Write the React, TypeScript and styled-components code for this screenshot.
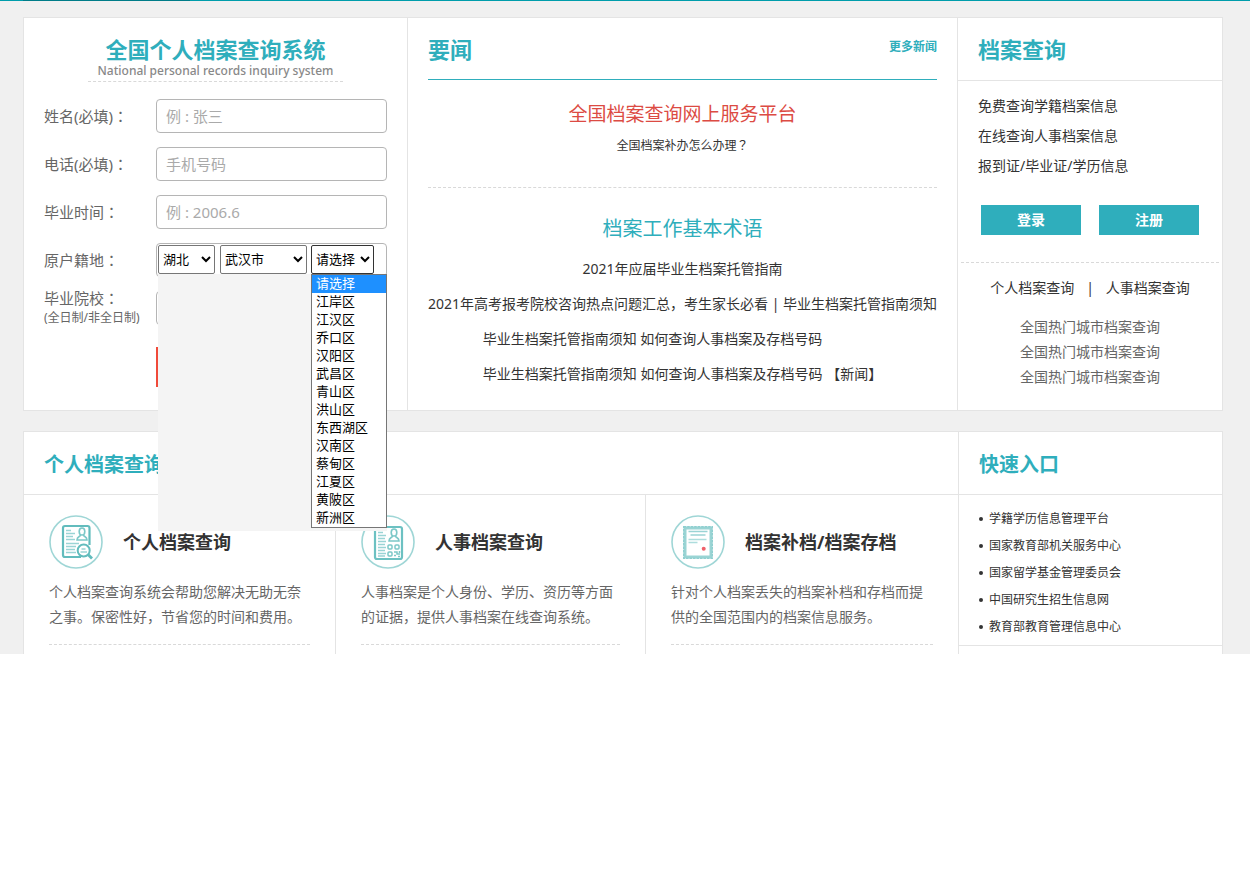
import React from "react";
import styled, { createGlobalStyle, css } from "styled-components";

const teal = "#2faebc";
const line = "#e4e4e4";
const dash = "#d9d9d9";

const GlobalStyle = createGlobalStyle`
  * { box-sizing: border-box; }
  body {
    margin: 0;
    background: #fff;
    color: #333;
    font: 14px/20px "Noto Sans", "Noto Sans CJK SC", sans-serif;
  }
  h1, h2, h3, p, ul { margin: 0; padding: 0; }
  ul { list-style: none; }
  a { color: inherit; text-decoration: none; }
  button, input, select { font-family: inherit; }
`;

const Page = styled.main`
  background: #f0f0f0;
`;

const TopBar = styled.div`
  height: 1px;
  padding-left: 23px;
  background: #009dab;
`;

const TopBarActive = styled.div`
  width: 167px;
  height: 1px;
  background: #007c88;
`;

const Container = styled.div`
  display: grid;
  gap: 20px;
  padding: 16px 27px 0 23px;
`;

const Panel = styled.section<{ $columns: string; $open?: boolean }>`
  display: grid;
  grid-template-columns: ${(p) => p.$columns};
  background: #fff;
  border: 1px solid ${line};
  ${(p) => p.$open && css`border-bottom: 0;`}
`;

const Column = styled.div<{ $divided?: boolean; $padded?: boolean }>`
  min-width: 0;
  ${(p) => p.$divided && css`border-left: 1px solid ${line};`}
  ${(p) => p.$padded && css`padding: 0 20px;`}
`;

const Title = styled.h2<{ $size?: number }>`
  font-size: ${(p) => p.$size ?? 22}px;
  line-height: 30px;
  font-weight: 700;
  color: ${teal};
`;

const DashedLine = styled.div<{ $space: string }>`
  margin: ${(p) => p.$space};
  border-top: 1px dashed ${dash};
`;

/* Punctuation centred in its full-width cell */
const Mark = styled.span`
  font-family: "Noto Sans CJK JP", sans-serif;
  line-height: 1;
`;

/* Query form */

const FormHeading = styled.header`
  width: 255px;
  margin: 0 auto 17px;
  padding: 16px 0 3px;
  border-bottom: 1px dashed ${dash};
  text-align: center;
`;

const FormSubtitle = styled.p`
  font-size: 12px;
  line-height: 14px;
  font-weight: 500;
  color: #888;
  white-space: nowrap;
`;

const Form = styled.form`
  display: grid;
  gap: 14px;
  padding-bottom: 23px;
`;

const FormRow = styled.div`
  display: grid;
  grid-template: 34px / 112px 1fr;
  align-items: center;
`;

const Label = styled.label`
  font-size: 15px;
  color: #666;
  white-space: nowrap;
`;

const LabelNote = styled.small`
  display: block;
  font-size: 12px;
`;

const fieldBox = css`
  width: 100%;
  height: 34px;
  border: 1px solid #b5b5b5;
  border-radius: 4px;
  background: #fff;
`;

const TextInput = styled.input`
  ${fieldBox}
  padding: 0 9px;
  font-size: 15px;
  color: #333;
  &::placeholder { color: #aaa; }
`;

const RegionBox = styled.div`
  ${fieldBox}
  position: relative;
  display: flex;
  align-items: flex-start;
  padding: 1px;
`;

const Select = styled.select<{ $width: number; $gap?: number; $active?: boolean }>`
  flex: none;
  width: ${(p) => p.$width}px;
  height: 29px;
  margin-right: ${(p) => p.$gap ?? 0}px;
  padding: 0 0 2px;
  border: 1px solid ${(p) => (p.$active ? "#333" : "#767676")};
  border-radius: 2px;
  background: #fff;
  font-size: 13px;
  color: #000;
`;

const MenuShade = styled.div`
  position: absolute;
  z-index: 2;
  top: 30px;
  left: 1px;
  right: -1px;
  display: flex;
  justify-content: flex-end;
  align-items: flex-start;
  height: 257px;
  background: #f4f4f4;
`;

const Menu = styled.ul`
  width: 76px;
  border: 1px solid #767676;
  background: #fff;
`;

const MenuItem = styled.li<{ $selected: boolean }>`
  height: 18px;
  padding-left: 4px;
  font-size: 13px;
  line-height: 17px;
  color: ${(p) => (p.$selected ? "#fff" : "#000")};
  background: ${(p) => (p.$selected ? "#1e90ff" : "#fff")};
`;

const SubmitButton = styled.button`
  height: 40px;
  margin: 8px 0 0 112px;
  border: 0;
  background: #f04a3a;
`;

/* News */

const NewsHeader = styled.header`
  display: flex;
  justify-content: space-between;
  height: 62px;
  padding-top: 16px;
  border-bottom: 1px solid ${teal};
`;

const MoreLink = styled.a`
  font-size: 12px;
  line-height: 26px;
  font-weight: 700;
  color: ${teal};
`;

const Headline = styled.h3<{ $tone: string; $size: number; $space: string }>`
  margin: ${(p) => p.$space};
  font-size: ${(p) => p.$size}px;
  line-height: 30px;
  font-weight: 400;
  text-align: center;
  color: ${(p) => p.$tone};
`;

const Question = styled.p`
  padding-top: 7px;
  font-size: 12px;
  text-align: center;
`;

const NewsList = styled.ul`
  padding-top: 7px;
  text-align: center;
  white-space: nowrap;
`;

const NewsItem = styled.li<{ $inset?: boolean }>`
  line-height: 35px;
  ${(p) => p.$inset && css`padding-right: 60px;`}
`;

/* Side column */

const SideHeader = styled.header<{ $top: number }>`
  height: 63px;
  padding: ${(p) => p.$top}px 20px 0;
  border-bottom: 1px solid ${line};
`;

const ServiceList = styled.ul`
  padding: 10px 20px 0;
  line-height: 30px;
`;

const Actions = styled.div`
  display: flex;
  gap: 18px;
  padding: 24px 23px 27px;
`;

const ActionButton = styled.button`
  flex: 1;
  max-width: 100px;
  height: 30px;
  padding: 0 0 2px;
  border: 0;
  background: ${teal};
  color: #fff;
  font-size: 14px;
  font-weight: 700;
`;

const LinkPair = styled.nav`
  display: flex;
  justify-content: center;
  gap: 12px;
`;

const CityList = styled.ul`
  padding-top: 16px;
  line-height: 25px;
  text-align: center;
  color: #666;
`;

const Services = styled.div`
  display: grid;
  grid-template-columns: 311fr 310fr 313fr;
`;

const Service = styled.article`
  padding: 20px 25px 9px;
  & + & { border-left: 1px solid ${line}; }
`;

const ServiceHead = styled.header`
  display: flex;
  align-items: center;
  gap: 20px;
  height: 54px;
  margin-bottom: 10px;
  svg { flex: none; }
`;

const ServiceTitle = styled.h3`
  font-size: 18px;
  line-height: 28px;
  font-weight: 700;
  white-space: nowrap;
`;

const ServiceText = styled.p`
  line-height: 25px;
  color: #666;
`;

const QuickList = styled.ul`
  padding: 10px 20px 5px;
  border-bottom: 1px solid ${line};
  font-size: 12px;
  line-height: 27px;
`;

const QuickItem = styled.li`
  display: flex;
  align-items: center;
  gap: 6px;
  &::before {
    content: "";
    width: 4px;
    height: 4px;
    border-radius: 50%;
    background: #333;
  }
`;

const Badge = ({ children }: { children: React.ReactNode }) => (
  <svg width="54" height="54" viewBox="0 0 54 54" fill="none" aria-hidden="true">
    <circle cx="27" cy="27" r="26" stroke="#9fd6d6" strokeWidth="1.6" />
    {children}
  </svg>
);

const Person = () => (
  <g stroke="#7cc8c8" strokeWidth="1.6">
    <ellipse cx="33" cy="16.500" rx="2.800" ry="3.500" />
    <path d="M31.500 20c0 1.800-3.500 1.400-3.500 5h10c0-3.600-3.500-3.200-3.500-5" />
  </g>
);

const SearchRecordIcon = () => (
  <Badge>
    <path
      d="M40.500 30V13a2 2 0 0 0-2-2H16a2 2 0 0 0-2 2v27a2 2 0 0 0 2 2h16"
      stroke="#62bcbd"
      strokeWidth="2.200"
    />
    <Person />
    <path
      d="M17 15.500h5M17 18.500h9M17 21.500h7M17 24.500h9M17 28.500h13M17 31.500h10M17 34.500h9M17 37.500h10"
      stroke="#9ad4d5"
      strokeWidth="1.400"
    />
    <circle cx="34.700" cy="35.500" r="6" fill="#fff" stroke="#62bcbd" strokeWidth="2" />
    <path d="M32.500 34h4M31.500 37h6.500" stroke="#9ad4d5" strokeWidth="1.400" />
    <path d="M39 39.500l4 4" stroke="#62bcbd" strokeWidth="2.800" />
  </Badge>
);

const CodeRecordIcon = () => (
  <Badge>
    <rect x="14" y="12" width="27" height="32" rx="2" stroke="#6cc1c2" strokeWidth="2.200" />
    <g transform="translate(0 1)">
      <Person />
    </g>
    <path
      d="M17 17.500h5M17 20.500h8M17 23.500h7M17 26.500h8M17 29.500h7M17 32.500h8M17 35.500h7M17 38.500h8M17 41h7"
      stroke="#9ad4d5"
      strokeWidth="1.400"
    />
    <g stroke="#7cc8c8" strokeWidth="1.500">
      <rect x="27" y="30" width="4" height="4" rx="1" />
      <rect x="34" y="30" width="4" height="4" rx="1" />
      <rect x="27" y="37" width="4" height="4" rx="1" />
      <path d="M33 37h3v2h3M33 40.500h2M37 41.500h2M38.500 36v2" />
    </g>
  </Badge>
);

const CertificateIcon = () => (
  <Badge>
    <rect x="14" y="13" width="26" height="29" stroke="#9ad4d4" strokeWidth="3" />
    <rect
      x="12.700"
      y="11.700"
      width="28.600"
      height="31.600"
      stroke="#8fcfd0"
      strokeWidth="1.400"
      strokeDasharray="2.500 1"
    />
    <path d="M17.500 16.500h19M19.500 20h15" stroke="#9ad4d5" strokeWidth="1.500" />
    <path d="M17.500 24.500h18M17.500 27.500h9" stroke="#addddd" strokeWidth="1.500" />
    <circle cx="32.700" cy="33.700" r="2" fill="#f0606a" />
  </Badge>
);

const districts = [
  "请选择", "江岸区", "江汉区", "乔口区", "汉阳区", "武昌区", "青山区",
  "洪山区", "东西湖区", "汉南区", "蔡甸区", "江夏区", "黄陂区", "新洲区",
];

const services = [
  {
    icon: <SearchRecordIcon />,
    title: "个人档案查询",
    text: "个人档案查询系统会帮助您解决无助无奈之事。保密性好，节省您的时间和费用。",
  },
  {
    icon: <CodeRecordIcon />,
    title: "人事档案查询",
    text: "人事档案是个人身份、学历、资历等方面的证据，提供人事档案在线查询系统。",
  },
  {
    icon: <CertificateIcon />,
    title: "档案补档/档案存档",
    text: "针对个人档案丢失的档案补档和存档而提供的全国范围内的档案信息服务。",
  },
];

const quickLinks = [
  "学籍学历信息管理平台",
  "国家教育部机关服务中心",
  "国家留学基金管理委员会",
  "中国研究生招生信息网",
  "教育部教育管理信息中心",
];

const QueryForm = () => (
  <Column $padded>
    <FormHeading>
      <Title as="h1">全国个人档案查询系统</Title>
      <FormSubtitle>National personal records inquiry system</FormSubtitle>
    </FormHeading>
    <Form>
      <FormRow>
        <Label htmlFor="name">姓名(必填)<Mark>：</Mark></Label>
        <TextInput id="name" placeholder="例 : 张三" />
      </FormRow>
      <FormRow>
        <Label htmlFor="phone">电话(必填)<Mark>：</Mark></Label>
        <TextInput id="phone" type="tel" placeholder="手机号码" />
      </FormRow>
      <FormRow>
        <Label htmlFor="graduated">毕业时间<Mark>：</Mark></Label>
        <TextInput id="graduated" placeholder="例 : 2006.6" />
      </FormRow>
      <FormRow>
        <Label htmlFor="province">原户籍地<Mark>：</Mark></Label>
        <RegionBox>
          <Select id="province" $width={57} $gap={5}>
            <option>湖北</option>
          </Select>
          <Select aria-label="城市" $width={87} $gap={4}>
            <option>武汉市</option>
          </Select>
          <Select aria-label="区" $width={63} $active>
            {districts.map((d) => (
              <option key={d}>{d}</option>
            ))}
          </Select>
          <MenuShade>
            <Menu role="listbox" aria-label="区">
              {districts.map((d, i) => (
                <MenuItem key={d} role="option" aria-selected={i === 0} $selected={i === 0}>
                  {d}
                </MenuItem>
              ))}
            </Menu>
          </MenuShade>
        </RegionBox>
      </FormRow>
      <FormRow>
        <Label htmlFor="school">
          毕业院校<Mark>：</Mark>
          <LabelNote>(全日制/非全日制)</LabelNote>
        </Label>
        <TextInput id="school" />
      </FormRow>
      <SubmitButton type="submit" aria-label="查询" />
    </Form>
  </Column>
);

const News = () => (
  <Column $divided $padded>
    <NewsHeader>
      <Title>要闻</Title>
      <MoreLink href="#news">更多新闻</MoreLink>
    </NewsHeader>
    <Headline $tone="#dc4b43" $size={19} $space="19px 0 0">
      <a href="#platform">全国档案查询网上服务平台</a>
    </Headline>
    <Question>
      <a href="#reissue">全国档案补办怎么办理<Mark>？</Mark></a>
    </Question>
    <DashedLine $space="31px 0 0" />
    <Headline $tone={teal} $size={20} $space="26px 0 0">
      档案工作基本术语
    </Headline>
    <NewsList>
      <NewsItem>
        <a href="#guide">2021年应届毕业生档案托管指南</a>
      </NewsItem>
      <NewsItem>
        <a href="#exam">2021年高考报考院校咨询热点问题汇总，考生家长必看</a> |{" "}
        <a href="#notice">毕业生档案托管指南须知</a>
      </NewsItem>
      <NewsItem $inset>
        <a href="#notice">毕业生档案托管指南须知</a> <a href="#number">如何查询人事档案及存档号码</a>
      </NewsItem>
      <NewsItem>
        <a href="#notice">毕业生档案托管指南须知</a> <a href="#number">如何查询人事档案及存档号码</a>{" "}
        【新闻】
      </NewsItem>
    </NewsList>
  </Column>
);

const RecordSearch = () => (
  <Column $divided>
    <SideHeader $top={16}>
      <Title>档案查询</Title>
    </SideHeader>
    <ServiceList>
      <li>免费查询学籍档案信息</li>
      <li>在线查询人事档案信息</li>
      <li>报到证/毕业证/学历信息</li>
    </ServiceList>
    <Actions>
      <ActionButton type="button">登录</ActionButton>
      <ActionButton type="button">注册</ActionButton>
    </Actions>
    <DashedLine $space="0 3px 15px" />
    <LinkPair>
      <a href="#personal">个人档案查询</a>
      <span>|</span>
      <a href="#personnel">人事档案查询</a>
    </LinkPair>
    <CityList>
      {[1, 2, 3].map((n) => (
        <li key={n}>
          <a href="#cities">全国热门城市档案查询</a>
        </li>
      ))}
    </CityList>
  </Column>
);

export default function App() {
  return (
    <>
      <GlobalStyle />
      <Page>
        <TopBar>
          <TopBarActive />
        </TopBar>
        <Container>
          <Panel $columns="383px 1fr 265px">
            <QueryForm />
            <News />
            <RecordSearch />
          </Panel>
          <Panel $columns="1fr 264px" $open>
            <Column>
              <SideHeader $top={18}>
                <Title $size={20}>个人档案查询</Title>
              </SideHeader>
              <Services>
                {services.map((s) => (
                  <Service key={s.title}>
                    <ServiceHead>
                      {s.icon}
                      <ServiceTitle>{s.title}</ServiceTitle>
                    </ServiceHead>
                    <ServiceText>{s.text}</ServiceText>
                    <DashedLine $space="15px 0 0" />
                  </Service>
                ))}
              </Services>
            </Column>
            <Column $divided>
              <SideHeader $top={18}>
                <Title $size={20}>快速入口</Title>
              </SideHeader>
              <QuickList>
                {quickLinks.map((q) => (
                  <QuickItem key={q}>
                    <a href="#quick">{q}</a>
                  </QuickItem>
                ))}
              </QuickList>
            </Column>
          </Panel>
        </Container>
      </Page>
    </>
  );
}
